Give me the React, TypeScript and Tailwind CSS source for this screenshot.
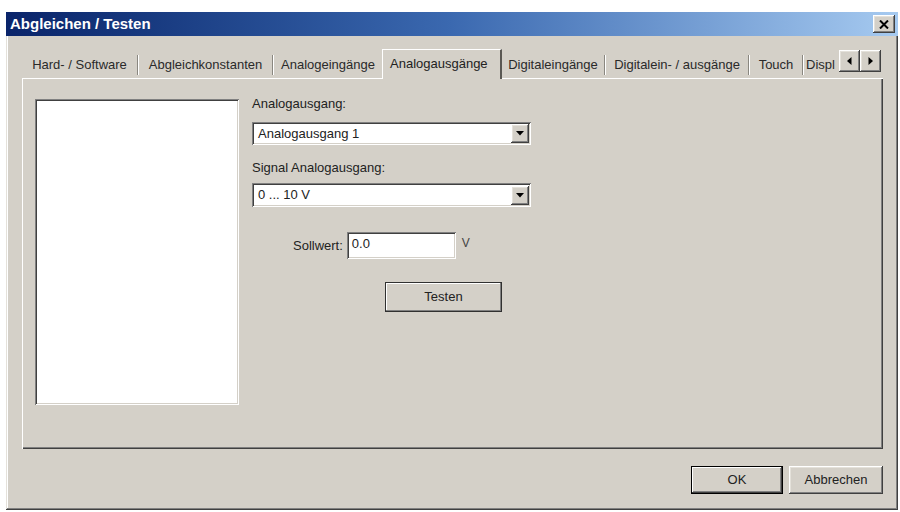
import React from "react";

const raised =
  "shadow-[inset_-1px_-1px_0_#404040,inset_1px_1px_0_#ffffff,inset_-2px_-2px_0_#808080,inset_2px_2px_0_#e4e1da]";
const sunken =
  "shadow-[inset_1px_1px_0_#808080,inset_-1px_-1px_0_#ffffff,inset_2px_2px_0_#404040,inset_-2px_-2px_0_#d4d0c8]";

function Sep() {
  return <div className="w-[2px] h-[20px] mb-[3px] border-l border-[#8a8780] border-r border-r-white shrink-0" />;
}

function Tab({ label, w }: { label: string; w: number }) {
  return (
    <div
      className="h-[26px] flex items-center justify-center shrink-0 text-[#2a2a2a] whitespace-nowrap"
      style={{ width: w }}
    >
      {label}
    </div>
  );
}

function Arrow({ dir }: { dir: "left" | "right" | "down" }) {
  if (dir === "down")
    return (
      <svg width="8" height="5" viewBox="0 0 8 5">
        <path d="M0 0H8L4 4.5Z" fill="#000" />
      </svg>
    );
  return (
    <svg width="5" height="8" viewBox="0 0 5 8">
      {dir === "left" ? <path d="M4.5 0V8L0 4Z" fill="#000" /> : <path d="M0.5 0V8L5 4Z" fill="#000" />}
    </svg>
  );
}

function Combo({ value, h }: { value: string; h: number }) {
  return (
    <div className={`w-[279px] bg-white ${sunken} flex items-center pl-[6px] pr-[2px]`} style={{ height: h }}>
      <span className="flex-1 text-[#222]">{value}</span>
      <div className={`w-[18px] h-[19px] bg-[#d4d0c8] ${raised} flex items-center justify-center`}>
        <Arrow dir="down" />
      </div>
    </div>
  );
}

export default function App() {
  return (
    <div
      className="w-[900px] h-[512px] bg-white pt-[12px] pl-[6px] text-[13px] leading-[16px]"
      style={{ fontFamily: '"Liberation Sans", Arial, sans-serif' }}
    >
      <div className="w-[892px] h-[498px] bg-[#d4d0c8] flex flex-col shadow-[inset_-1px_-1px_0_#404040,inset_1px_1px_0_#e4e1da,inset_-2px_-2px_0_#808080,inset_2px_2px_0_#ffffff]">
        {/* Title bar */}
        <div className="h-[24px] bg-linear-to-r from-[#0a246a] via-[#3b69b0] to-[#a6caf0] flex items-center pl-[4px] pr-[3px] shrink-0">
          <span className="flex-1 text-white font-bold text-[15px]">Abgleichen / Testen</span>
          <div className={`w-[22px] h-[18px] bg-[#d4d0c8] ${raised} flex items-center justify-center`}>
            <svg width="10" height="9" viewBox="0 0 10 9">
              <path d="M1 0.5L9 8.5M9 0.5L1 8.5" stroke="#000" strokeWidth="2" />
            </svg>
          </div>
        </div>

        {/* Tabs */}
        <div className="mt-[12px] ml-[16px] w-[861px] flex flex-col">
          <div className="h-[30px] flex items-end">
            <Tab label="Hard- / Software" w={115} />
            <Sep />
            <Tab label="Abgleichkonstanten" w={133} />
            <Sep />
            <Tab label="Analogeingänge" w={108} />
            <div className="w-[120px] h-[30px] -mb-[1px] relative z-10 bg-[#d4d0c8] border-l border-t border-white border-r-2 border-r-[#5a5853] flex items-start pt-[6px] pl-[7px] text-[#222] whitespace-nowrap shrink-0">
              Analogausgänge
            </div>
            <Tab label="Digitaleingänge" w={102} />
            <Sep />
            <Tab label="Digitalein- / ausgänge" w={142} />
            <Sep />
            <Tab label="Touch" w={52} />
            <Sep />
            <div className="h-[26px] w-[35px] flex items-center pl-[2px] text-[#2a2a2a] whitespace-nowrap shrink-0">
              Displ
            </div>
            <div className="flex mb-[6px] shrink-0">
              <div className={`w-[21px] h-[22px] bg-[#d4d0c8] ${raised} flex items-center justify-center`}>
                <Arrow dir="left" />
              </div>
              <div className={`w-[21px] h-[22px] bg-[#d4d0c8] ${raised} flex items-center justify-center`}>
                <Arrow dir="right" />
              </div>
            </div>
          </div>

          {/* Panel */}
          <div className="h-[371px] border-l border-t border-white shadow-[inset_-1px_-1px_0_#404040,inset_-2px_-2px_0_#808080] flex pt-[17px] pl-[12px]">
            <div className={`w-[204px] h-[306px] mt-[3px] bg-white ${sunken}`} />
            <div className="ml-[13px] flex flex-col">
              <div className="h-[16px] text-[#222]">Analogausgang:</div>
              <div className="mt-[10px]">
                <Combo value="Analogausgang 1" h={23} />
              </div>
              <div className="mt-[15px] h-[16px] text-[#222]">Signal Analogausgang:</div>
              <div className="mt-[7px]">
                <Combo value="0 ... 10 V" h={24} />
              </div>
              <div className="mt-[25px] h-[27px] flex items-center">
                <span className="ml-[41px] text-[#222]">Sollwert:</span>
                <div className={`ml-[4px] w-[109px] h-[27px] bg-white ${sunken} flex items-center pl-[5px] pb-[4px] text-[#222]`}>
                  0.0
                </div>
                <span className="ml-[6px] pb-[6px] text-[#444] text-[12px]">V</span>
              </div>
              <div
                className={`mt-[23px] ml-[133px] w-[117px] h-[30px] bg-[#d4d0c8] border border-[#303030] shadow-[inset_-1px_-1px_0_#808080,inset_1px_1px_0_#ffffff] flex items-center justify-center text-[#222]`}
              >
                Testen
              </div>
            </div>
          </div>
        </div>

        {/* Buttons */}
        <div className="mt-[17px] ml-[685px] flex gap-[6px]">
          <div className="w-[92px] h-[28px] bg-[#d4d0c8] border border-black shadow-[inset_-1px_-1px_0_#404040,inset_1px_1px_0_#ffffff,inset_-2px_-2px_0_#808080] flex items-center justify-center text-[#222]">
            OK
          </div>
          <div className={`w-[94px] h-[28px] bg-[#d4d0c8] ${raised} flex items-center justify-center text-[#222]`}>
            Abbrechen
          </div>
        </div>
      </div>
    </div>
  );
}
